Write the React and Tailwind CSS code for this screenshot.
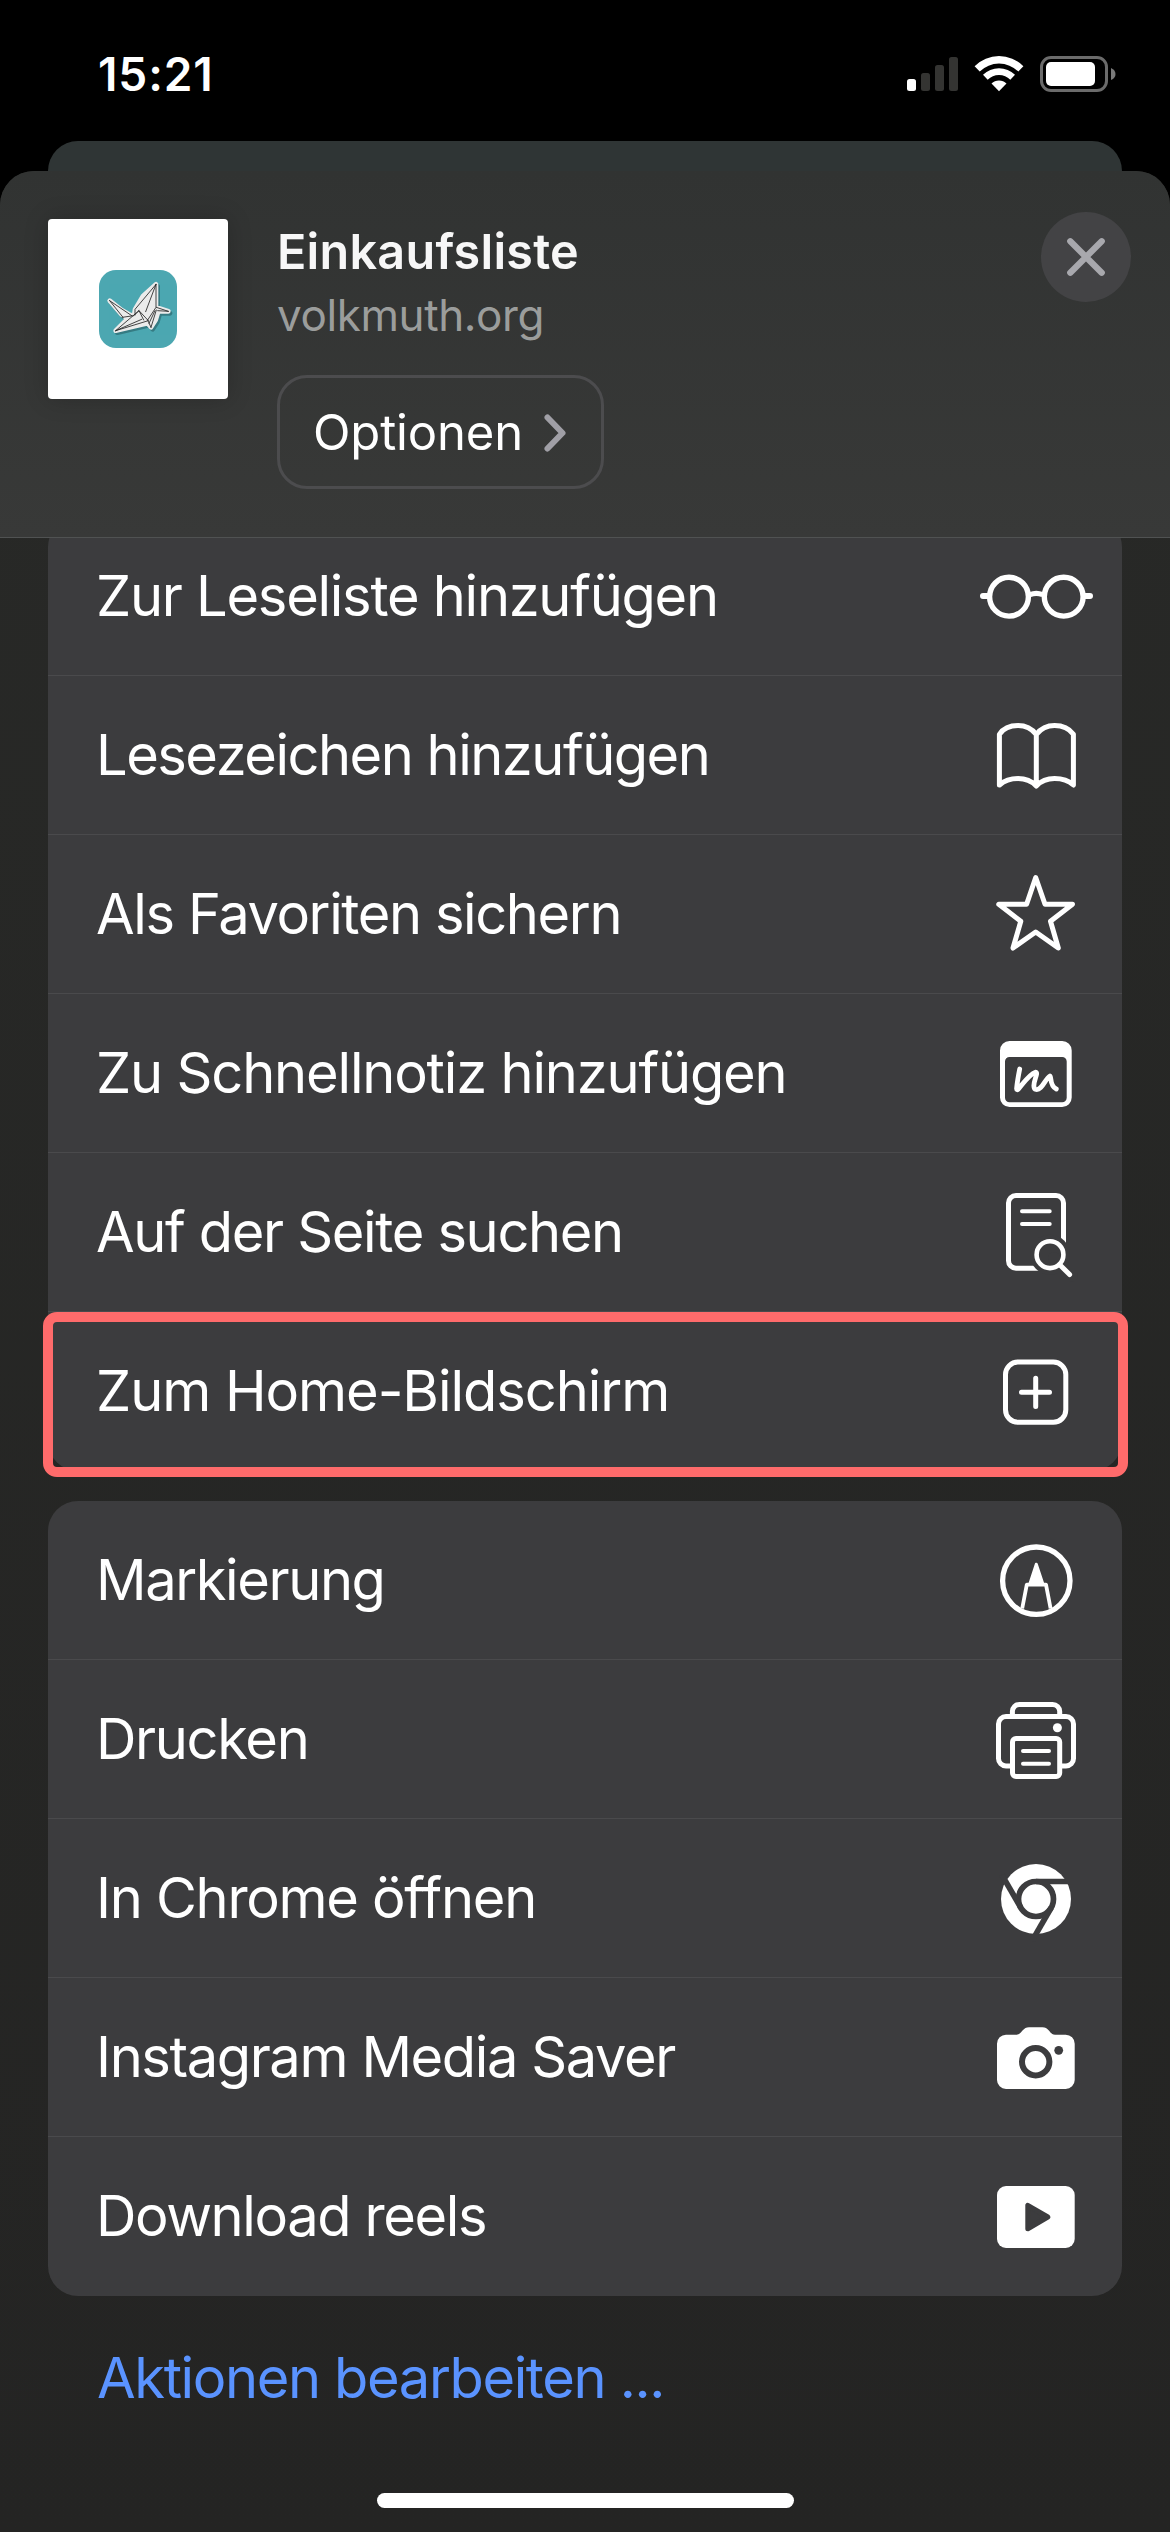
import clsx from "clsx";

const CARD = "#3c3c3e";

function Icon({ children }) {
  return (
    <svg
      className="w-[120px] h-[120px] shrink-0"
      viewBox="0 0 120 120"
      fill="none"
      stroke="#fff"
      strokeWidth="5"
      strokeLinecap="round"
      strokeLinejoin="round"
    >
      {children}
    </svg>
  );
}

const GlassesIcon = () => (
  <Icon>
    <circle cx="33" cy="60.7" r="19.4" strokeWidth="5.4" />
    <circle cx="87.7" cy="60.7" r="19.4" strokeWidth="5.4" />
    <path d="M54 58.6Q60.3 56 66.6 58.6" strokeWidth="5.2" strokeLinecap="butt" />
    <path d="M7 60H12M109 60H114" strokeWidth="6" />
  </Icon>
);

const BookIcon = () => (
  <Icon>
    <path d="M60.3 39.5C56 34 50 30.6 42 30.6S27 34 23.4 39.3V90C28 86 34 83.6 42 83.6S56 86.5 60.3 91C64.6 86.5 70.6 83.6 78.6 83.6S93 86 97.4 90V39.3C93.5 34 86.6 30.6 78.6 30.6S64.6 34 60.3 39.5V90" />
  </Icon>
);

const StarIcon = () => (
  <Icon>
    <path d="M59.7 23.5L69 50.3H96.5L74.5 67.3L82.3 94L59.7 78L37 94L44.8 67.3L22.8 50.3H50.6Z" />
  </Icon>
);

const QuickNoteIcon = () => (
  <Icon>
    <path
      d="M33.5 28H86.2A9.5 9.5 0 0 1 95.7 37.5V84.5A9.5 9.5 0 0 1 86.2 94H33.5A9.5 9.5 0 0 1 24 84.5V37.5A9.5 9.5 0 0 1 33.5 28ZM33.5 44A4.5 4.5 0 0 0 29 48.5V84.8A4.5 4.5 0 0 0 33.5 89.3H86.2A4.5 4.5 0 0 0 90.7 84.8V48.5A4.5 4.5 0 0 0 86.2 44Z"
      fill="#fff"
      fillRule="evenodd"
      stroke="none"
    />
    <path
      d="M43.7 56C42.5 62 41.3 68 40.6 75.5C40.5 77 41.5 77.2 42.5 76C48 69.5 53 61.5 59.5 59.2C61.5 59 60.5 62 59.5 65C57.5 71 57 76 60 76.5C66 77.5 69 66 74 63C75.5 63.5 73.5 73 80.3 76"
      strokeWidth="4.8"
    />
  </Icon>
);

const FindIcon = () => (
  <Icon>
    <rect x="32.5" y="23.5" width="55" height="72.8" rx="7.5" />
    <path d="M46 39.3H73.7M46 52H73.7" strokeWidth="4" />
    <circle cx="74" cy="82.7" r="20" fill={CARD} stroke="none" />
    <path d="M78 86L96 104" stroke={CARD} strokeWidth="12" />
    <circle cx="74" cy="82.7" r="13.4" strokeWidth="4.6" />
    <path d="M84 93L93.6 102.5" />
  </Icon>
);

const AddBoxIcon = () => (
  <Icon>
    <rect x="29.5" y="31" width="60.3" height="60.3" rx="12.5" />
    <path d="M45.5 61.2H73.5M59.7 47.2V75.5" />
  </Icon>
);

const MarkupIcon = () => (
  <Icon>
    <circle cx="60.3" cy="60.7" r="33.7" strokeWidth="5.3" />
    <path d="M46.2 88.5L50.8 64.7H70L74.6 88.5" strokeWidth="3.8" strokeLinecap="butt" />
    <path d="M60.3 44.2L54 63.5H66.7Z" fill="#fff" strokeWidth="3" />
  </Icon>
);

const PrinterIcon = () => (
  <Icon>
    <path d="M36.4 37V32.3A7 7 0 0 1 43.4 25.4H76.7A7 7 0 0 1 83.7 32.3V37" />
    <rect x="22.5" y="37.5" width="75" height="49.5" rx="7.5" />
    <rect x="36.5" y="59.6" width="47.2" height="38" rx="3.5" fill={CARD} />
    <path d="M47 72H73M47 84.7H73" strokeWidth="4" />
    <circle cx="81.4" cy="48.7" r="4.5" fill="#fff" stroke="none" />
  </Icon>
);

const ChromeIcon = () => (
  <Icon>
    <circle cx="60" cy="61" r="35" fill="#fff" stroke="none" />
    <g stroke={CARD} strokeWidth="5.7" strokeLinecap="butt">
      <circle cx="60" cy="61" r="17.5" />
      <path d="M60 43.5H98" />
      <path d="M60 43.5H98" transform="rotate(120 60 61)" />
      <path d="M60 43.5H98" transform="rotate(240 60 61)" />
    </g>
  </Icon>
);

const CameraIcon = () => (
  <Icon>
    <path
      d="M30 37.7H40C46 37.7 46 30.3 53 30.3H66.5C73.5 30.3 73.5 37.7 79 37.7H89.7A9 9 0 0 1 98.7 46.7V83A9 9 0 0 1 89.7 92H30A9 9 0 0 1 21 83V46.7A9 9 0 0 1 30 37.7Z"
      fill="#fff"
      stroke="none"
    />
    <circle cx="59.7" cy="64.7" r="13.7" stroke={CARD} strokeWidth="6" />
    <circle cx="82.7" cy="53.3" r="4.4" fill={CARD} stroke="none" />
  </Icon>
);

const ReelsIcon = () => (
  <Icon>
    <rect x="21" y="30" width="77.7" height="62" rx="9" fill="#fff" stroke="none" />
    <path d="M51.8 49.3V72.8L71.8 61Z" fill={CARD} stroke={CARD} />
  </Icon>
);

const pageActions = [
  { label: "Zur Leseliste hinzufügen", icon: GlassesIcon, tracking: "tracking-[-1.27px]" },
  { label: "Lesezeichen hinzufügen", icon: BookIcon, tracking: "tracking-[-1.5px]" },
  { label: "Als Favoriten sichern", icon: StarIcon, tracking: "tracking-[-1.4px]" },
  { label: "Zu Schnellnotiz hinzufügen", icon: QuickNoteIcon, tracking: "tracking-[-1.17px]" },
  { label: "Auf der Seite suchen", icon: FindIcon, tracking: "tracking-[-1.35px]" },
  { label: "Zum Home-Bildschirm", icon: AddBoxIcon, tracking: "tracking-[-1.05px]", highlighted: true },
];

const appActions = [
  { label: "Markierung", icon: MarkupIcon, tracking: "tracking-[-1.4px]" },
  { label: "Drucken", icon: PrinterIcon, tracking: "tracking-[-1.35px]" },
  { label: "In Chrome öffnen", icon: ChromeIcon, tracking: "tracking-[-1.3px]" },
  { label: "Instagram Media Saver", icon: CameraIcon, tracking: "tracking-[-1.4px]" },
  { label: "Download reels", icon: ReelsIcon, tracking: "tracking-[-1.4px]" },
];

function ActionList({ actions, className }) {
  return (
    <ul className={clsx("rounded-[30px] bg-[#3c3c3e]", className)}>
      {actions.map(({ label, icon: RowIcon, tracking, highlighted }) => (
        <li
          key={label}
          className="relative flex h-[159px] items-center justify-between border-b border-[#4a4a4c] pl-[48px] pr-[26px] last:border-transparent"
        >
          <span className={clsx("text-[56px] leading-[68px] whitespace-nowrap", tracking)}>
            {label}
          </span>
          <RowIcon />
          {highlighted && (
            <div className="absolute top-0 -left-[5px] -right-[6px] h-[165px] rounded-[14px] border-[10px] border-[#ff6b6b]" />
          )}
        </li>
      ))}
    </ul>
  );
}

function StatusBar() {
  return (
    <div className="flex h-[141px] items-start justify-between pl-[98px] pr-[54px] pt-[48px]">
      <span className="-mt-px text-[46px] leading-[54px] font-semibold tracking-[0.9px]">15:21</span>
      <svg className="w-[212px] h-[54px]" viewBox="904 48 212 54" fill="#fff">
        <rect x="907" y="79" width="9" height="12" rx="2.5" />
        <g fill="#343432">
          <rect x="921" y="73" width="9" height="18" rx="2.5" />
          <rect x="935" y="65" width="9" height="26" rx="2.5" />
          <rect x="949" y="57" width="9" height="34" rx="2.5" />
        </g>
        <path d="M974.6 66.2A34.5 34.5 0 0 1 1023.4 66.2L1018.3 71.5A27.5 27.5 0 0 0 979.7 71.5Z" />
        <path d="M983 74.8A22.6 22.6 0 0 1 1015 74.8L1010.3 79.7A16 16 0 0 0 987.7 79.7Z" />
        <path d="M991.5 83.5A10.6 10.6 0 0 1 1006.5 83.5L999 91.3Z" />
        <rect x="1041.5" y="57.5" width="65" height="33" rx="9.5" fill="none" stroke="#6b6b6b" strokeWidth="3" />
        <rect x="1046" y="62" width="49" height="24" rx="5" />
        <path d="M1111 68Q1115.5 70 1115.5 74T1111 80Z" fill="#7a7a7a" />
      </svg>
    </div>
  );
}

function CraneIcon() {
  const outline =
    "M32 92L68 120L98 137L106 132L108 118L132 78L171 43V112L208 124L178 124L170 150L156 172L146 160L50 182L86 146L68 134Z";
  return (
    <svg
      className="w-[78px] h-[78px] rounded-[17px] bg-[#4ca7b1]"
      viewBox="0 0 234 234"
      strokeLinejoin="round"
      strokeLinecap="round"
    >
      <path d={outline} transform="translate(5 6)" fill="#2d6970" stroke="#2d6970" strokeWidth="14" opacity=".7" />
      <path d={outline} fill="#ebebeb" stroke="#ebebeb" strokeWidth="14" />
      <g fill="none" stroke="#222" strokeWidth="2.5">
        <path d="M32 92L98 137M32 92L72 142M171 43L108 118V135M171 43L140 125M171 43V112L146 150" />
        <path d="M208 124L172 112M208 124L176 122M50 182L120 122L148 152L50 182M50 182L128 148" />
        <path d="M120 122L104 137L70 142M120 122L134 150M156 172L146 150M156 172L172 120M150 160L168 122" />
      </g>
    </svg>
  );
}

function SheetHeader() {
  return (
    <header className="flex h-[367px] items-start border-b border-[#505252] bg-linear-to-b from-[#313332] to-[#383938] pl-[48px] pr-[39px]">
      <div className="mt-[48px] flex size-[180px] items-center justify-center rounded-[4px] bg-white shadow-[0_0_24px_rgba(0,0,0,0.2)]">
        <CraneIcon />
      </div>
      <div className="ml-[49px] mt-[51px] flex flex-1 flex-col items-start">
        <h1 className="text-[48.5px] leading-[60px] font-semibold tracking-[0.25px] text-[#f7f7f7]">
          Einkaufsliste
        </h1>
        <p className="mt-[7px] text-[44px] leading-[52px] tracking-[-0.4px] text-[#9b9d9c]">
          volkmuth.org
        </p>
        <button className="mt-[34px] flex h-[114px] w-[327px] items-center gap-[20px] rounded-[30px] border-[3px] border-[#4c4c4e] pl-[33px]">
          <span className="mt-[2px] text-[49px] leading-[60px] tracking-[-0.15px]">Optionen</span>
          <svg
            className="w-[24px] h-[42px]"
            viewBox="0 0 24 42"
            fill="none"
            stroke="#a09fa6"
            strokeWidth="6"
            strokeLinecap="round"
            strokeLinejoin="round"
          >
            <path d="M4.5 6.5L19.5 22L4.5 37.5" />
          </svg>
        </button>
      </div>
      <button className="mt-[41px] flex size-[90px] items-center justify-center rounded-full bg-[#434345]">
        <svg className="size-[40px]" viewBox="0 0 40 40" stroke="#a8a8ad" strokeWidth="6.3" strokeLinecap="round">
          <path d="M4.3 4.3L35.7 35.7M35.7 4.3L4.3 35.7" />
        </svg>
      </button>
    </header>
  );
}

function App() {
  return (
    <div className="flex h-[2532px] w-[1170px] flex-col overflow-hidden bg-black font-[Inter,sans-serif] text-white">
      <StatusBar />
      <div className="mx-[48px] h-[30px] shrink-0 rounded-t-[30px] bg-[#2f3535]" />
      <div className="flex flex-1 flex-col overflow-hidden rounded-t-[34px] bg-linear-to-b from-[#282927] to-[#242423]">
        <SheetHeader />
        <main className="flex-1 overflow-hidden px-[43px]">
          <ActionList actions={pageActions} className="mx-[5px] -mt-[21px]" />
          <ActionList actions={appActions} className="mx-[5px] mt-[30px]" />
          <a className="mt-[48px] ml-[54px] block text-[56px] leading-[68px] tracking-[-1.37px] text-[#5a93ff]">
            Aktionen bearbeiten ...
          </a>
        </main>
        <div className="mx-auto mb-[24px] h-[15px] w-[417px] rounded-full bg-white" />
      </div>
    </div>
  );
}

export default App;
